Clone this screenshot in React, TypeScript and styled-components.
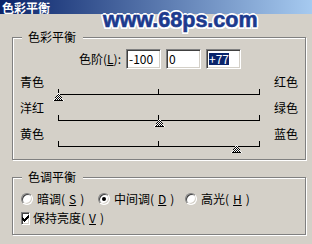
import React from 'react';
import styled, { createGlobalStyle } from 'styled-components';

const GlobalStyle = createGlobalStyle`
  html, body {
    margin: 0;
    padding: 0;
    background: #d4d0c8;
  }
  body {
    font-family: "Noto Sans CJK SC", "Noto Sans", sans-serif;
    font-size: 12px;
    color: #000;
  }
`;

const Window = styled.div`
  position: relative;
  width: 312px;
  height: 244px;
  overflow: hidden;
  background: #d4d0c8;
  display: flex;
  flex-direction: column;
`;

const TitleBar = styled.div`
  height: 13px;
  padding: 1px 0 0 2px;
  background: linear-gradient(to right, #0a246a 0%, #a6caf0 100%);
  color: #fff;
  font-weight: 700;
  font-size: 12px;
  line-height: 13px;
`;

/* site watermark stamped over the dialog */
const Watermark = styled.div`
  position: absolute;
  left: 103px;
  top: 9px;
  font-family: "Liberation Sans", Arial, sans-serif;
  font-weight: 700;
  font-size: 21.5px;
  line-height: 22px;
  color: #1c3a8e;
  -webkit-text-stroke: 0.6px #1c3a8e;
  text-shadow: -2px 0 #fff, 2px 0 #fff, 0 -2px #fff, 0 2px #fff,
    -1.5px -1.5px #fff, 1.5px -1.5px #fff, -1.5px 1.5px #fff, 1.5px 1.5px #fff,
    0 0 3px #3a62b8;
`;

const Group = styled.section<{ $top: number; $pad: string }>`
  position: relative;
  margin: ${(p) => p.$top}px 6px 0 12px;
  padding: ${(p) => p.$pad};
  border: 1px solid #808080;
  box-shadow: inset 1px 1px 0 #fff, 1px 1px 0 #fff;
`;

const Legend = styled.span`
  position: absolute;
  top: -7px;
  left: 9px;
  padding: 0 7px 0 6px;
  background: #d4d0c8;
  line-height: 12px;
`;

const Hotkey = styled.span`
  text-decoration: underline;
`;

const LevelsRow = styled.div`
  display: grid;
  grid-template-columns: 108px repeat(3, 35px);
  column-gap: 5px;
  align-items: center;
  height: 20px;
  margin-bottom: 7px;
`;

const LevelsLabel = styled.span`
  text-align: right;
  line-height: 12px;
`;

const Field = styled.div`
  box-sizing: border-box;
  height: 20px;
  display: flex;
  align-items: center;
  padding-left: 2px;
  border: 1px solid;
  border-color: #808080 #fff #fff #808080;
  box-shadow: inset 1px 1px 0 #404040, inset -1px -1px 0 #d4d0c8;
  background: #fff;
  line-height: 12px;
`;

const Selected = styled.span`
  background: #0a246a;
  color: #fff;
  line-height: 12px;
`;

const SliderRow = styled.div`
  display: grid;
  grid-template-columns: 45px 202px 1fr;
  height: 26px;
`;

const SideLabel = styled.span<{ $side: 'left' | 'right' }>`
  padding-left: ${(p) => (p.$side === 'left' ? 7 : 14)}px;
  line-height: 12px;
`;

const Track = styled.div`
  position: relative;
  height: 26px;

  &::before {
    content: '';
    position: absolute;
    left: 0;
    right: 0;
    top: 18px;
    height: 1px;
    background: #000;
  }
`;

const Tick = styled.span<{ $at: number }>`
  position: absolute;
  top: 13px;
  left: ${(p) => p.$at}px;
  width: 1px;
  height: 5px;
  background: #000;
`;

const ThumbMark = styled.svg`
  position: absolute;
  top: 17px;
  display: block;
`;

const OptionRow = styled.div`
  display: grid;
  grid-template-columns: 77px 87px auto;
  align-items: center;
  height: 14px;
  padding-left: 8px;
`;

const Option = styled.label`
  display: flex;
  align-items: center;
  gap: 4px;
  line-height: 12px;
  white-space: nowrap;
`;

const Radio = styled.span<{ $checked?: boolean }>`
  box-sizing: border-box;
  width: 12px;
  height: 12px;
  border-radius: 50%;
  border: 1px solid;
  border-color: #808080 #fff #fff #808080;
  box-shadow: inset 1px 1px 0 #404040, inset -1px -1px 0 #d4d0c8;
  background: #fff;
  display: flex;
  align-items: center;
  justify-content: center;

  &::after {
    content: '';
    display: ${(p) => (p.$checked ? 'block' : 'none')};
    width: 4px;
    height: 4px;
    border-radius: 50%;
    background: #000;
  }
`;

const CheckBox = styled.span`
  box-sizing: border-box;
  width: 13px;
  height: 13px;
  border: 1px solid;
  border-color: #808080 #fff #fff #808080;
  box-shadow: inset 1px 1px 0 #404040, inset -1px -1px 0 #d4d0c8;
  background: #fff;
  display: flex;
  align-items: center;
  justify-content: center;
  margin-right: -1px;
`;

const OptionStack = styled.div`
  display: flex;
  flex-direction: column;
  gap: 5px;
`;

const TRACK = 201;

function Thumb({ value }: { value: number }) {
  const x = ((value + 100) / 200) * TRACK - 5;
  return (
    <ThumbMark width="11" height="8" viewBox="0 0 11 8" style={{ left: x }} shapeRendering="crispEdges">
      <defs>
        <pattern id="dither" width="2" height="2" patternUnits="userSpaceOnUse">
          <rect width="2" height="2" fill="#fff" />
          <rect width="1" height="1" fill="#000" />
          <rect x="1" y="1" width="1" height="1" fill="#000" />
        </pattern>
      </defs>
      <path d="M5.5 0 L11 8 L0 8 Z" fill="url(#dither)" />
      <path d="M1 7.5 H10" stroke="#000" strokeWidth="1" />
    </ThumbMark>
  );
}

const sliders = [
  { left: '青色', right: '红色', value: -100 },
  { left: '洋红', right: '绿色', value: 0 },
  { left: '黄色', right: '蓝色', value: 77 },
];

export default function App() {
  return (
    <Window>
      <GlobalStyle />
      <TitleBar>色彩平衡</TitleBar>
      <Watermark>www.68ps.com</Watermark>

      <Group $top={23} $pad="11px 0 5px">
        <Legend>色彩平衡</Legend>
        <LevelsRow>
          <LevelsLabel>
            色阶(<Hotkey>L</Hotkey>):
          </LevelsLabel>
          <Field>-100</Field>
          <Field>0</Field>
          <Field>
            <Selected>+77</Selected>
          </Field>
        </LevelsRow>
        {sliders.map((s) => (
          <SliderRow key={s.left}>
            <SideLabel $side="left">{s.left}</SideLabel>
            <Track>
              <Tick $at={0} />
              <Tick $at={100} />
              <Tick $at={TRACK} />
              <Thumb value={s.value} />
            </Track>
            <SideLabel $side="right">{s.right}</SideLabel>
          </SliderRow>
        ))}
      </Group>

      <Group $top={17} $pad="14px 0 9px">
        <Legend>色调平衡</Legend>
        <OptionStack>
          <OptionRow>
            <Option>
              <Radio />
              暗调(<Hotkey>S</Hotkey>)
            </Option>
            <Option>
              <Radio $checked />
              中间调(<Hotkey>D</Hotkey>)
            </Option>
            <Option>
              <Radio />
              高光(<Hotkey>H</Hotkey>)
            </Option>
          </OptionRow>
          <OptionRow>
            <Option>
              <CheckBox>
                <svg width="7" height="7" viewBox="0 0 7 7" shapeRendering="crispEdges">
                  <path d="M0 2h1v1h1v1h1v-1h1v-1h1v-1h1v-1h1v3h-1v1h-1v1h-1v1h-1v1h-1v-1h-1v-1h-1v-1h-1z" fill="#000" />
                </svg>
              </CheckBox>
              保持亮度(<Hotkey>V</Hotkey>)
            </Option>
          </OptionRow>
        </OptionStack>
      </Group>
    </Window>
  );
}
